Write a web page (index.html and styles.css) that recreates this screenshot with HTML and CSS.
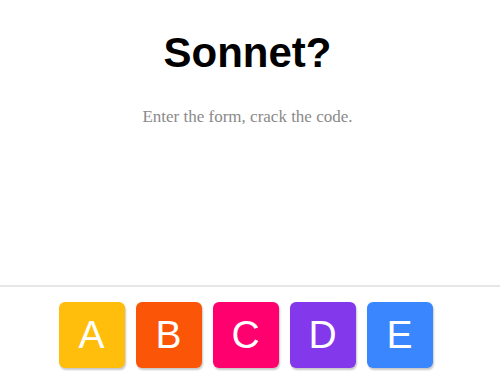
FILE: index.html
```html
<!DOCTYPE html>
<html lang="en">
<head>
<meta charset="utf-8">
<title>Sonnet?</title>
<link rel="stylesheet" href="styles.css">
</head>
<body>
<div class="page">
  <header class="intro">
    <h1 class="title">Sonnet?</h1>
    <p class="tagline">Enter the form, crack the code.</p>
  </header>
  <footer class="choices">
    <button class="choice choice-a">A</button>
    <button class="choice choice-b">B</button>
    <button class="choice choice-c">C</button>
    <button class="choice choice-d">D</button>
    <button class="choice choice-e">E</button>
  </footer>
</div>
</body>
</html>
```

FILE: styles.css
```css
html, body {
  margin: 0;
  padding: 0;
  background: #ffffff;
}

.page {
  height: 100vh;
  display: flex;
  flex-direction: column;
}

.intro {
  flex: 1;
  display: flex;
  flex-direction: column;
  align-items: center;
  padding: 29px 5px 0 0;
}

.title {
  margin: 0;
  font-family: "Liberation Sans", Arial, sans-serif;
  font-weight: bold;
  font-size: 42px;
  color: #000000;
}

.tagline {
  margin: 30px 0 0;
  font-family: "Liberation Serif", "Times New Roman", serif;
  font-size: 17px;
  color: #8a8a8a;
}

.choices {
  border-top: 2px solid #e6e6e6;
  display: flex;
  justify-content: center;
  gap: 11px;
  padding: 15px 9px 15px 0;
}

.choice {
  width: 66px;
  height: 66px;
  border: none;
  border-radius: 6px;
  padding: 0;
  color: #ffffff;
  font-family: "Liberation Sans", Arial, sans-serif;
  font-size: 39px;
  font-weight: normal;
  box-shadow: 1px 2px 2px rgba(0, 0, 0, 0.22);
  display: flex;
  align-items: center;
  justify-content: center;
}

.choice-a { background: #ffbe0b; }
.choice-b { background: #fb5607; }
.choice-c { background: #ff006e; }
.choice-d { background: #8338ec; }
.choice-e { background: #3a86ff; }
```
